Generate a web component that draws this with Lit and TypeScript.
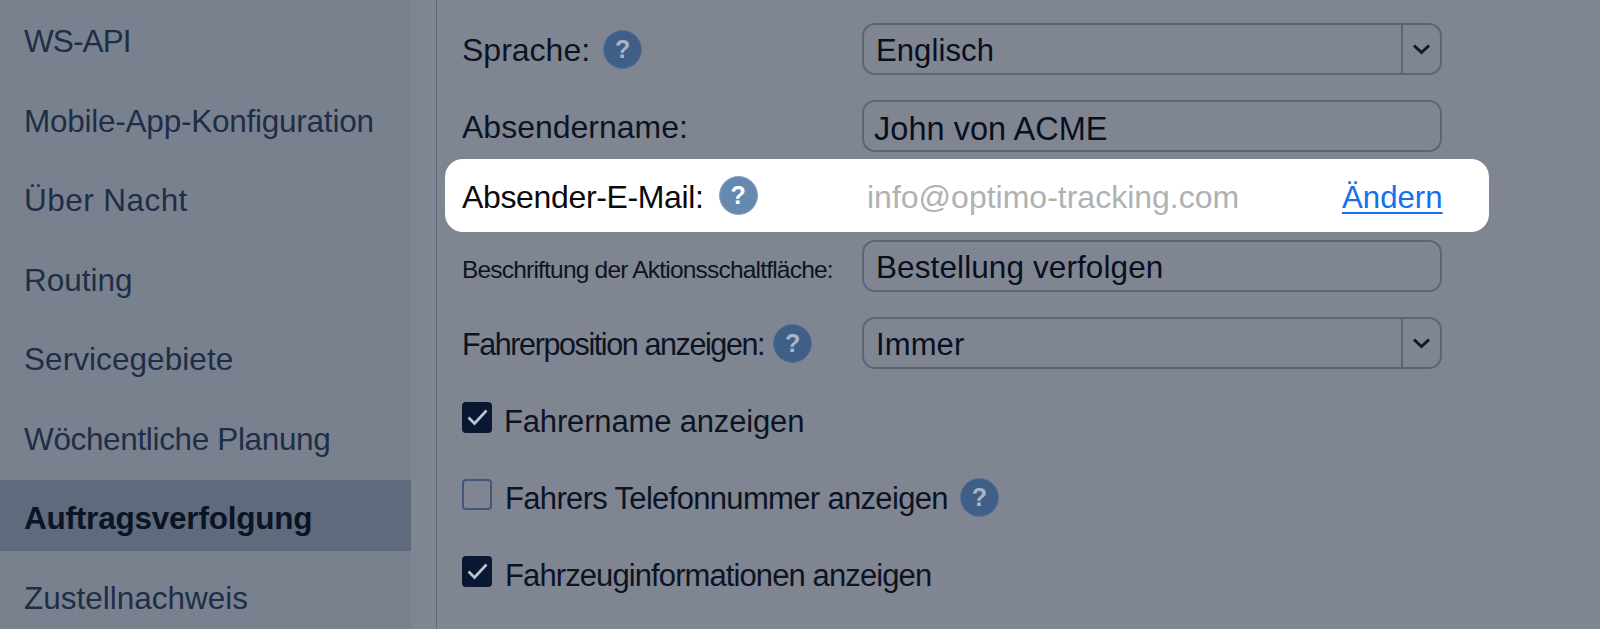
import { LitElement, html, css } from "lit";
import { customElement } from "lit/decorators.js";

const NAV: [string, number][] = [
  ["WS-API", -0.9],
  ["Mobile-App-Konfiguration", -0.24],
  ["Über Nacht", 0.45],
  ["Routing", 0],
  ["Servicegebiete", 0.07],
  ["Wöchentliche Planung", -0.35],
  ["Auftragsverfolgung", -0.22],
  ["Zustellnachweis", 0],
];

@customElement("app-root")
export class AppRoot extends LitElement {
  static styles = css`
    :host { display: block; width: 1600px; height: 629px; overflow: hidden; font-family: "Liberation Sans", Arial, sans-serif; background: #808592; }
    * { box-sizing: border-box; }
    .page { display: flex; height: 629px; overflow: hidden; }
    .side { width: 411px; flex: none; background: #7a818e; padding-top: 3px; display: flex; flex-direction: column; gap: 8.5px; height: 629px; overflow: hidden; }
    .item { flex: none; height: 71px; display: flex; align-items: center; padding: 6px 0 0 24px; font-size: 31.5px; color: #1e2e47; white-space: nowrap; }
    .item.on { background: #5f6a7c; color: #0a1424; font-weight: 700; }
    .gutter { width: 25px; flex: none; }
    .main { flex: 1; border-left: 1.5px solid #5c687c; padding: 23px 0 0 8px; display: flex; flex-direction: column; overflow: hidden; }
    .row { flex: none; display: flex; align-items: center; height: 52px; margin-bottom: 25px; padding-left: 17px; width: 1044px; color: #0c1424; font-size: 32px; }
    .label { width: 400px; flex: none; display: flex; align-items: center; gap: 13px; white-space: nowrap; }
    .label > span:first-child { padding-top: 3px; }
    .tight { font-size: 30.5px; letter-spacing: -1.4px; gap: 9px; }
    .small { font-size: 24.5px; letter-spacing: -0.8px; padding-top: 5px; }
    .field { width: 580px; height: 52px; flex: none; display: flex; align-items: center; border: 2.5px solid #5a6579; border-radius: 13px; padding-left: 12px; color: #080f1e; font-size: 31px; letter-spacing: 0.1px; }
    .value { flex: 1; padding-top: 3px; }
    .big { font-size: 32.5px; letter-spacing: 0.04px; margin-left: -2px; padding-top: 6px; }
    .mid { font-size: 31.5px; letter-spacing: 0.1px; }
    .arrow { width: 39px; height: 100%; flex: none; display: flex; align-items: center; justify-content: center; border-left: 2.5px solid #5a6579; }
    .arrow svg { width: 19px; height: 12px; }
    .hi { height: 73px; margin: -18px 0 8px; background: #fff; border-radius: 18px; color: #0a0a0a; }
    .hi .label { letter-spacing: -0.35px; gap: 15px; }
    .hi .label .help { letter-spacing: 0; }
    .hi .mail { width: 480px; flex: none; padding: 4px 0 0 5px; color: #b0b1b3; }
    .hi a { font-size: 31.2px; padding-top: 4px; color: #1570ec; text-decoration: underline; text-decoration-thickness: 2px; text-underline-offset: 4px; }
    .help { width: 39px; height: 39px; flex: none; border-radius: 50%; background: #3f5f87; border: 1px solid #54719a; color: #a9b5c6; font-size: 25px; font-weight: 700; display: flex; align-items: center; justify-content: center; letter-spacing: 0; }
    .hi .help { background: #668aaf; border-color: #88a3c2; color: #fff; }
    .check { height: 31px; margin-bottom: 46px; font-size: 31px; }
    .first { margin-top: 8px; }
    .box { width: 30px; height: 31px; flex: none; border-radius: 4px; background: #0a1733; display: flex; align-items: center; justify-content: center; margin-right: 13px; }
    .box.off { background: none; border: 2px solid #41567a; }
    .box svg { width: 21px; height: 17px; }
    .ct { white-space: nowrap; padding-top: 9px; }
    .c1 { letter-spacing: -0.16px; margin-left: -1px; }
    .c2 { letter-spacing: -0.67px; }
    .c3 { letter-spacing: -0.9px; }
    .check .help { margin: 6px 0 0 12px; }
  `;

  help() { return html`<span class="help">?</span>`; }

  arrow() {
    return html`<span class="arrow"><svg viewBox="0 0 19 12"><path d="M2 2.5 L9.5 9.5 L17 2.5" fill="none" stroke="#0e1930" stroke-width="3"/></svg></span>`;
  }

  box(on: boolean) {
    return on
      ? html`<span class="box"><svg viewBox="0 0 21 17"><path d="M1.5 8.5 L7.5 14.5 L19.5 1.5" fill="none" stroke="#bcc4d0" stroke-width="2.6"/></svg></span>`
      : html`<span class="box off"></span>`;
  }

  render() {
    return html`<div class="page">
      <nav class="side">
        ${NAV.map(([n, ls]) => html`<div class="item ${n === "Auftragsverfolgung" ? "on" : ""}" style="letter-spacing:${ls}px">${n}</div>`)}
      </nav>
      <div class="gutter"></div>
      <main class="main">
        <div class="row"><div class="label"><span>Sprache:</span>${this.help()}</div><div class="field"><span class="value">Englisch</span>${this.arrow()}</div></div>
        <div class="row"><div class="label"><span>Absendername:</span></div><div class="field"><span class="value big">John von ACME</span></div></div>
        <div class="row hi"><div class="label"><span>Absender-E-Mail:</span>${this.help()}</div><span class="mail">info@optimo-tracking.com</span><a>Ändern</a></div>
        <div class="row"><div class="label small"><span>Beschriftung der Aktionsschaltfläche:</span></div><div class="field"><span class="value mid">Bestellung verfolgen</span></div></div>
        <div class="row"><div class="label tight"><span>Fahrerposition anzeigen:</span>${this.help()}</div><div class="field"><span class="value">Immer</span>${this.arrow()}</div></div>
        <div class="row check first">${this.box(true)}<span class="ct c1">Fahrername anzeigen</span></div>
        <div class="row check">${this.box(false)}<span class="ct c2">Fahrers Telefonnummer anzeigen</span>${this.help()}</div>
        <div class="row check">${this.box(true)}<span class="ct c3">Fahrzeuginformationen anzeigen</span></div>
      </main>
    </div>`;
  }
}
